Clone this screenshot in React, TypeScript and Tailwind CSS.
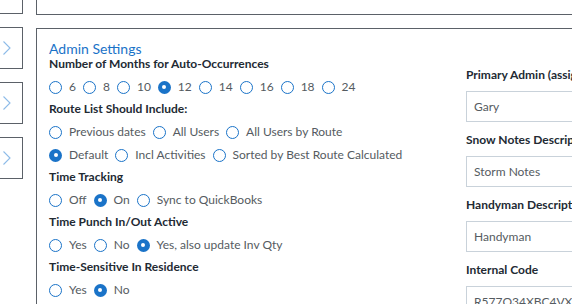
import React from 'react';

type Opt = { label: string; checked?: boolean };

const FONT = { fontFamily: 'Lato, "Open Sans", sans-serif' };

function Radio({ label, checked }: Opt) {
  return (
    <label className="flex items-center gap-[7px]">
      {checked ? (
        <span className="flex h-[13px] w-[13px] items-center justify-center rounded-full bg-[#1a73c8]">
          <span className="h-[4px] w-[4px] rounded-full bg-white" />
        </span>
      ) : (
        <span className="h-[13px] w-[13px] rounded-full border-[1.5px] border-[#1a73c8] bg-white" />
      )}
      <span className="text-[12px] text-[#555b61]">{label}</span>
    </label>
  );
}

function RadioRow({ options }: { options: Opt[] }) {
  return (
    <div className="flex h-[18px] items-center gap-[7px]">
      {options.map((o) => (
        <Radio key={o.label} {...o} />
      ))}
    </div>
  );
}

function Group({ title, rows }: { title: string; rows: Opt[][] }) {
  return (
    <div className="flex flex-col">
      <div className="h-[14px] text-[12px] font-bold leading-[14px] text-[#222a33]">{title}</div>
      <div className="mt-[7px] flex flex-col gap-[5px]">
        {rows.map((r, i) => (
          <RadioRow key={i} options={r} />
        ))}
      </div>
    </div>
  );
}

function Field({ label, value }: { label: string; value: string }) {
  return (
    <div className="flex flex-col">
      <div className="h-[14px] whitespace-nowrap text-[12px] font-bold leading-[14px] text-[#222a33]">{label}</div>
      <div className="mt-[9px] flex h-[31px] w-[140px] items-center border border-[#c9d2da] bg-white px-[7px] text-[12px] whitespace-nowrap text-[#555b61]">
        {value}
      </div>
    </div>
  );
}

function SideBox() {
  return (
    <div className="flex h-[42px] items-center border border-l-0 border-[#5b6168] pl-[2px]">
      <svg width="10" height="16" viewBox="0 0 10 16" fill="none">
        <path d="M1.5 1.5 L8 8 L1.5 14.5" stroke="#8dbbe8" strokeWidth="1.1" />
      </svg>
    </div>
  );
}

export default function App() {
  return (
    <div className="flex h-[304px] w-[572px] overflow-hidden bg-white" style={FONT}>
      <div className="mt-[-28px] flex w-[23px] shrink-0 flex-col gap-[13px]">
        <SideBox />
        <SideBox />
        <SideBox />
        <SideBox />
      </div>

      <div className="ml-[13px] flex min-w-0 flex-1 flex-col">
        <div className="mt-[-20px] h-[35px] w-[600px] shrink-0 border border-[#5b6168]" />

        <div className="mt-[13px] flex w-[600px] flex-1 border border-b-0 border-[#5b6168] pl-[12px] pt-[12px]">
          <div className="flex w-[417px] shrink-0 flex-col">
            <div className="h-[16px] text-[14px] leading-[16px] text-[#1a73c8]">Admin Settings</div>
            <div className="flex flex-col gap-[6px]">
              <Group
                title="Number of Months for Auto-Occurrences"
                rows={[
                  [
                    { label: '6' },
                    { label: '8' },
                    { label: '10' },
                    { label: '12', checked: true },
                    { label: '14' },
                    { label: '16' },
                    { label: '18' },
                    { label: '24' },
                  ],
                ]}
              />
              <Group
                title="Route List Should Include:"
                rows={[
                  [{ label: 'Previous dates' }, { label: 'All Users' }, { label: 'All Users by Route' }],
                  [
                    { label: 'Default', checked: true },
                    { label: 'Incl Activities' },
                    { label: 'Sorted by Best Route Calculated' },
                  ],
                ]}
              />
              <Group
                title="Time Tracking"
                rows={[[{ label: 'Off' }, { label: 'On', checked: true }, { label: 'Sync to QuickBooks' }]]}
              />
              <Group
                title="Time Punch In/Out Active"
                rows={[[{ label: 'Yes' }, { label: 'No' }, { label: 'Yes, also update Inv Qty', checked: true }]]}
              />
              <Group
                title="Time-Sensitive In Residence"
                rows={[[{ label: 'Yes' }, { label: 'No', checked: true }]]}
              />
            </div>
          </div>

          <div className="flex flex-col gap-[11px] pt-[27px]">
            <Field label="Primary Admin (assigned)" value="Gary" />
            <Field label="Snow Notes Description" value="Storm Notes" />
            <Field label="Handyman Description" value="Handyman" />
            <Field label="Internal Code" value="R577O34XBC4VX50Q" />
          </div>
        </div>
      </div>
    </div>
  );
}
